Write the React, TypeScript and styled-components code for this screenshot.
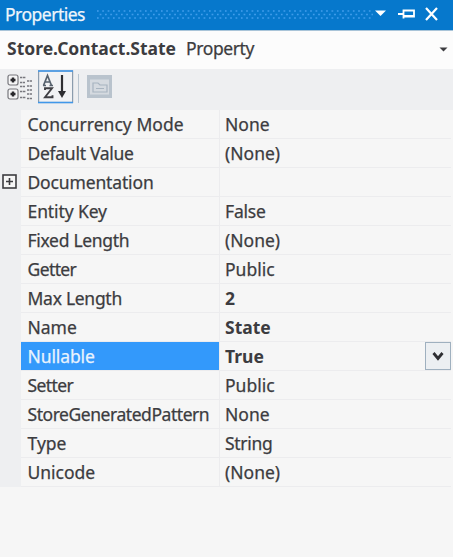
import React from "react";
import styled, { createGlobalStyle, css } from "styled-components";

const GlobalStyle = createGlobalStyle`
  * { box-sizing: border-box; }
  body { margin: 0; background: #f6f6f6; }
`;

const Panel = styled.div`
  width: 453px;
  height: 557px;
  display: flex;
  flex-direction: column;
  background: #f6f6f6;
  color: #3c3c40;
  font: 17.5px/29px "Noto Sans", "Open Sans", sans-serif;
  overflow: hidden;
  white-space: nowrap;
`;

const Text = styled.span<{ $spacing?: number; $bold?: boolean }>`
  letter-spacing: ${(p) => p.$spacing ?? 0}px;
  font-weight: ${(p) => (p.$bold ? 700 : 400)};
  -webkit-text-stroke: ${(p) => (p.$bold ? 0 : 0.25)}px currentColor;
`;

const TitleBar = styled.header`
  height: 31px;
  flex: none;
  display: flex;
  align-items: center;
  padding: 0 7px 2px 5px;
  background: #0678cc;
  border-bottom: 1px solid #a9c4d8;
  color: #eef5fb;
`;

const Title = styled.div`
  width: 92px;
`;

const ObjectBar = styled.div`
  height: 38px;
  flex: none;
  display: flex;
  align-items: center;
  padding: 0 5px 3px 7px;
  background: #fcfcfc;
`;

const ObjectType = styled.div`
  margin-left: 10px;
  flex: 1;
`;

const Toolbar = styled.div`
  height: 41px;
  flex: none;
  display: flex;
  align-items: flex-start;
  padding-left: 7px;
  background: #eeeff1;
`;

const Grid = styled.div`
  display: flex;
  flex-direction: column;
`;

const Row = styled.div`
  height: 29px;
  display: grid;
  grid-template-columns: 21px 199px 231px 2px;
`;

const Gutter = styled.div`
  background: #eeeff1;
  padding: 6px 0 0 2px;
  line-height: 0;
`;

const cell = css`
  border-bottom: 1px solid #ececee;
  line-height: 28px;
`;

const NameCell = styled.div<{ $selected?: boolean }>`
  ${cell}
  padding-left: 6.5px;
  border-right: 1px solid #ececee;
  ${(p) =>
    p.$selected &&
    css`
      background: #3399fb;
      background-clip: padding-box;
      color: #e9f3fd;
    `}
`;

const ValueCell = styled.div`
  ${cell}
  padding-left: 5px;
  display: flex;
  justify-content: space-between;
`;

const DropButton = styled.button`
  width: 26px;
  height: 28px;
  padding: 0;
  border: 1px solid #9fb0bf;
  background: #eceff2;
  display: flex;
  align-items: center;
  justify-content: center;
`;

type Property = {
  name: string;
  value: string;
  nameSpacing?: number;
  valueSpacing?: number;
  bold?: boolean;
  expandable?: boolean;
  selected?: boolean;
};

const properties: Property[] = [
  { name: "Concurrency Mode", value: "None", nameSpacing: 0.05 },
  { name: "Default Value", value: "(None)", nameSpacing: -0.28 },
  { name: "Documentation", value: "", nameSpacing: -0.15, expandable: true },
  { name: "Entity Key", value: "False", nameSpacing: -0.1, valueSpacing: -0.2 },
  { name: "Fixed Length", value: "(None)", nameSpacing: -0.3 },
  { name: "Getter", value: "Public", nameSpacing: -0.6 },
  { name: "Max Length", value: "2", nameSpacing: -0.28, bold: true },
  { name: "Name", value: "State", bold: true },
  { name: "Nullable", value: "True", nameSpacing: -0.1, bold: true, selected: true },
  { name: "Setter", value: "Public", nameSpacing: -0.6 },
  { name: "StoreGeneratedPattern", value: "None", nameSpacing: -0.45 },
  { name: "Type", value: "String", valueSpacing: -0.3 },
  { name: "Unicode", value: "(None)" },
];

const Grip = () => (
  <svg width="276" height="9">
    <defs>
      <pattern id="grip" width="5.33" height="9" patternUnits="userSpaceOnUse">
        <path d="M0 1h1.6M2.7 4.5h1.6M0 8h1.6" stroke="#45a0ee" strokeWidth="1.5" />
      </pattern>
    </defs>
    <rect width="276" height="9" fill="url(#grip)" />
  </svg>
);

const WindowIcons = () => (
  <svg width="66" height="16" viewBox="378 6 66 16">
    <path d="M380 10.5h11l-5.5 5.5z" fill="#fff" />
    <path d="M403 14h5M408.500 9.500v9M409 10.500h10v6h-10M409 16h10" stroke="#fff" strokeWidth="1.8" fill="none" />
    <path d="M431 8l11 12M442 8l-11 12" stroke="#fff" strokeWidth="2.2" />
  </svg>
);

const ToolIcons = () => (
  <svg width="110" height="36" viewBox="7 69 110 36">
    <g fill="#f6f6f7" stroke="#77777c" strokeWidth="1.2">
      <rect x="8" y="75" width="10" height="10" rx="2" />
      <rect x="8" y="89" width="10" height="10" rx="2" />
    </g>
    <path d="M10.5 80h5M13 77.500v5M10.500 94h5M13 91.500v5" stroke="#29292d" strokeWidth="2.4" />
    <path
      d="M20 77.500h6M20 82.500h5M20 91.500h6M20 97.500h6M27 81h5M27 86h5M27 94h5M27 98.500h5M20 86.500h5M27 90h5"
      stroke="#77777e"
      strokeWidth="1.4"
      strokeDasharray="2.200 .6"
    />
    <rect x="38.600" y="71" width="34" height="31.500" fill="#f1f2f4" stroke="#8b9cad" strokeWidth="1.2" />
    <path d="M38 71h35M38 102.500h35" stroke="#3f97ea" strokeWidth="1.5" />
    <path d="M43.500 85.500l4-10 4 10M45 82h5.500M43 85.500h3M49.500 85.500h3.500" stroke="#56616d" strokeWidth="1.7" fill="none" />
    <path d="M45 90v-1.700h7L45 97.200h7.500v-2" stroke="#3f3f44" strokeWidth="1.9" fill="none" />
    <path d="M62 75v17" stroke="#2d2d31" strokeWidth="2.200" />
    <path d="M58 91h8l-4 7z" fill="#2d2d31" />
    <path d="M78.500 74v29" stroke="#b9c5d0" />
    <path d="M87 75h25v23H87z" fill="#b9c3cd" />
    <path d="M90 79.500h19v15H90z" fill="#d5dae0" />
    <path d="M93 92v-9h5l2 2h7v7zM96 88.500h8" fill="none" stroke="#a8b4c0" strokeWidth="1.200" />
  </svg>
);

const Expander = () => (
  <svg width="15" height="15">
    <rect x="1" y="1" width="13" height="13" fill="#f6f6f6" stroke="#3c3c40" strokeWidth="1.600" />
    <path d="M4 7.500h7M7.500 4v7" stroke="#3c3c40" strokeWidth="1.600" />
  </svg>
);

export default function App() {
  return (
    <Panel>
      <GlobalStyle />
      <TitleBar>
        <Title>
          <Text $spacing={-0.5}>Properties</Text>
        </Title>
        <Grip />
        <WindowIcons />
      </TitleBar>
      <ObjectBar>
        <Text $bold>Store.Contact.State</Text>
        <ObjectType>
          <Text $spacing={-0.4}>Property</Text>
        </ObjectType>
        <svg width="9" height="6">
          <path d="M0.500 1.500h8L4.500 5.500z" fill="#3c3c40" />
        </svg>
      </ObjectBar>
      <Toolbar>
        <ToolIcons />
      </Toolbar>
      <Grid>
        {properties.map((p) => (
          <Row key={p.name}>
            <Gutter>{p.expandable && <Expander />}</Gutter>
            <NameCell $selected={p.selected}>
              <Text $spacing={p.nameSpacing}>{p.name}</Text>
            </NameCell>
            <ValueCell>
              <Text $spacing={p.valueSpacing} $bold={p.bold}>
                {p.value}
              </Text>
              {p.selected && (
                <DropButton aria-label="Open value list">
                  <svg width="12" height="10">
                    <path d="M1.500 2L6 7.500 10.500 2" fill="none" stroke="#2f2f33" strokeWidth="2.800" />
                  </svg>
                </DropButton>
              )}
            </ValueCell>
          </Row>
        ))}
      </Grid>
    </Panel>
  );
}
